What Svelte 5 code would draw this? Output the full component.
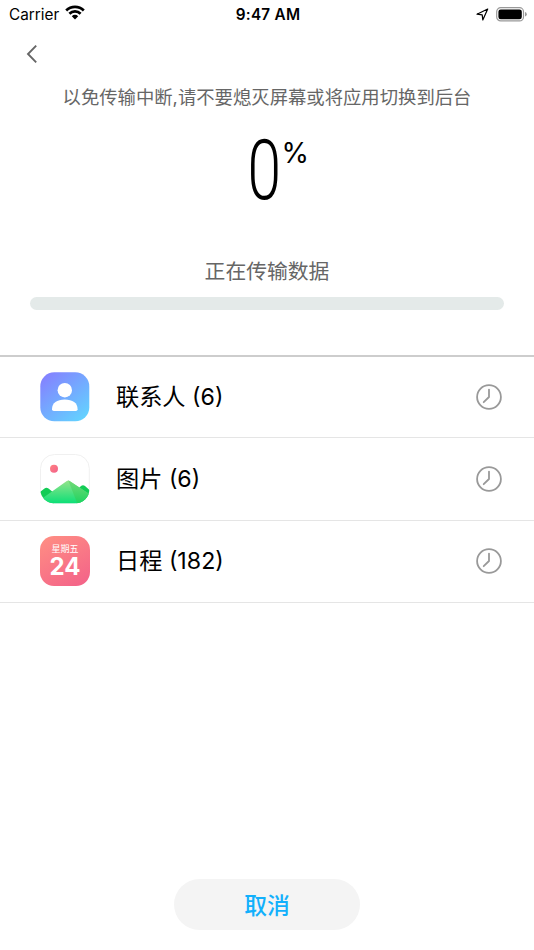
<script lang="ts">
	type Item = { icon: 'contacts' | 'photos' | 'calendar'; label: string; count: number };

	let progress = $state(0);

	const items: Item[] = [
		{ icon: 'contacts', label: '联系人', count: 6 },
		{ icon: 'photos', label: '图片', count: 6 },
		{ icon: 'calendar', label: '日程', count: 182 }
	];
</script>

<div class="screen">
	<div class="status-bar">
		<div class="carrier">
			<span>Carrier</span>
			<svg width="20" height="15" viewBox="0 0 20 15">
				<g fill="none" stroke="#000" stroke-width="2.7">
					<path d="M1.2 5.5 A12.4 12.4 0 0 1 18.8 5.5" />
					<path d="M4.4 8.8 A7.9 7.9 0 0 1 15.6 8.8" />
				</g>
				<path d="M10 14.4 L6.8 11.2 A4.5 4.5 0 0 1 13.2 11.2 Z" />
			</svg>
		</div>
		<span class="time">9:47 AM</span>
		<div class="indicators">
			<svg width="13" height="13" viewBox="0 0 13 13">
				<path
					d="M11.7 1 L1 6.2 L6.2 6.8 L6.8 11.9 Z"
					fill="none"
					stroke="#000"
					stroke-width="1.2"
					stroke-linejoin="round"
				/>
			</svg>
			<svg width="31" height="15" viewBox="0 0 31 15">
				<rect x="0.7" y="0.7" width="26.8" height="13.2" rx="4" fill="none" stroke="#999" stroke-width="1.2" />
				<rect x="2.4" y="2.4" width="23.4" height="9.8" rx="2.3" />
				<path d="M29 5 Q30.8 5.6 30.8 7.3 T29 9.6 Z" fill="#999" />
			</svg>
		</div>
	</div>

	<nav class="nav">
		<button class="back" aria-label="返回">
			<svg width="12" height="20" viewBox="0 0 12 20">
				<path d="M10.2 1.6 L2 10 L10.2 18.4" fill="none" stroke="#666" stroke-width="1.9" />
			</svg>
		</button>
	</nav>

	<p class="tip">以免传输中断,请不要熄灭屏幕或将应用切换到后台</p>

	<div class="percent">
		<span class="number">{progress}</span>
		<span class="unit">%</span>
	</div>

	<p class="state">正在传输数据</p>
	<div class="track">
		<div class="fill" style="width: {progress}%"></div>
	</div>

	<ul class="list">
		{#each items as item}
			<li class="row">
				{#if item.icon === 'contacts'}
					<svg class="icon" viewBox="0 0 50 50">
						<defs>
							<linearGradient id="contacts-bg" x1="0.1" y1="0" x2="0.9" y2="1">
								<stop offset="0" stop-color="#857fff" />
								<stop offset="1" stop-color="#62d5ff" />
							</linearGradient>
						</defs>
						<rect x="0.3" y="0.3" width="49" height="49" rx="14" fill="url(#contacts-bg)" />
						<circle cx="24.8" cy="18.2" r="7.2" fill="#fff" />
						<path
							d="M12 37.2 C12 31 17 27.6 24.8 27.6 S37.6 31 37.6 37.2 Q37.6 39 35.8 39 H13.8 Q12 39 12 37.2 Z"
							fill="#fff"
						/>
					</svg>
				{:else if item.icon === 'photos'}
					<svg class="icon" viewBox="0 0 50 50">
						<defs>
							<clipPath id="photos-clip">
								<rect x="0.3" y="0.3" width="49" height="49" rx="14" />
							</clipPath>
							<linearGradient id="hill-front" x1="0" y1="0" x2="0" y2="1">
								<stop offset="0" stop-color="#95e38b" />
								<stop offset="1" stop-color="#08df76" />
							</linearGradient>
							<linearGradient id="hill-side" x1="0" y1="0" x2="0" y2="1">
								<stop offset="0" stop-color="#75d978" />
								<stop offset="1" stop-color="#1bd45f" />
							</linearGradient>
							<linearGradient id="photos-sun" x1="0" y1="0" x2="1" y2="1">
								<stop offset="0" stop-color="#ff8280" />
								<stop offset="1" stop-color="#f2608b" />
							</linearGradient>
						</defs>
						<rect x="0.5" y="0.5" width="48.8" height="48.8" rx="14" fill="#fff" stroke="#f0f0f0" />
						<circle cx="14" cy="14.8" r="4" fill="url(#photos-sun)" />
						<g clip-path="url(#photos-clip)">
							<path d="M0 38 L4.5 34.4 Q6.5 33 8.5 34.6 L14 39 V50 H0 Z" fill="#12cc55" />
							<path d="M36 37 L41 32 Q43 30.3 45 32 L50 36.5 V50 H36 Z" fill="#12cc55" />
							<path d="M0 46 L26.8 27 Q28.2 26 29.6 27 L50 40.5 V50 H0 Z" fill="url(#hill-front)" />
							<path d="M28.2 26.3 L29.6 27 L50 40.5 V50 H37.5 Z" fill="url(#hill-side)" />
						</g>
					</svg>
				{:else}
					<div class="icon calendar">
						<span class="weekday">星期五</span>
						<span class="day">24</span>
					</div>
				{/if}

				<span class="label">{item.label} <span class="count">({item.count})</span></span>

				<svg class="pending" viewBox="0 0 26 26">
					<g fill="none" stroke="#999" stroke-width="1.8">
						<circle cx="13" cy="13" r="11.9" />
						<path d="M13 5.6 V13 L7.7 18.2" stroke-linecap="round" stroke-linejoin="round" />
					</g>
				</svg>
			</li>
		{/each}
	</ul>

	<div class="footer">
		<button class="cancel">取消</button>
	</div>
</div>

<style>
	:global(body) {
		margin: 0;
		background: #fff;
	}

	.screen {
		display: flex;
		flex-direction: column;
		height: 950px;
		overflow: hidden;
		font-family: Inter, 'Noto Sans CJK SC', sans-serif;
		color: #000;
	}

	p,
	ul {
		margin: 0;
		padding: 0;
	}

	button {
		border: 0;
		padding: 0;
		font-family: inherit;
	}

	.status-bar {
		display: grid;
		grid-template-columns: 1fr auto 1fr;
		align-items: center;
		height: 28px;
		padding: 0 7px 0 9px;
		font-size: 15.3px;
	}

	.carrier {
		display: flex;
		align-items: center;
		gap: 6px;
	}

	.carrier svg {
		margin-top: -3px;
	}

	.time {
		font-weight: 600;
		letter-spacing: 0.25px;
	}

	.indicators {
		display: flex;
		justify-content: flex-end;
		align-items: center;
		gap: 7px;
	}

	.nav {
		display: flex;
		align-items: center;
		height: 52px;
		padding-left: 26px;
	}

	.back {
		display: flex;
		background: none;
	}

	.tip {
		height: 34px;
		line-height: 34px;
		font-size: 18.35px;
		text-align: center;
		color: #666;
	}

	.percent {
		display: flex;
		justify-content: center;
		align-items: flex-start;
		height: 144px;
		padding-left: 26px;
	}

	.number {
		margin: 15px -6px 0 -10px;
		font-family: Roboto, sans-serif;
		font-weight: 300;
		font-size: 84px;
		line-height: 84px;
		transform: scaleX(0.72);
	}

	.unit {
		margin-top: 22px;
		font-size: 28px;
		line-height: 34px;
	}

	.state {
		height: 28px;
		line-height: 28px;
		font-size: 20.8px;
		text-align: center;
		color: #666;
	}

	.track {
		height: 13px;
		margin: 11px 30px 0;
		border-radius: 7px;
		background: #e4eae9;
		overflow: hidden;
	}

	.fill {
		height: 100%;
		background: #0eaefb;
	}

	.list {
		margin-top: 45px;
		border-top: 2px solid #cdcdcd;
		list-style: none;
	}

	.row {
		display: flex;
		align-items: center;
		box-sizing: border-box;
		height: 82.5px;
		padding: 0 32px 0 40px;
		border-bottom: 1.5px solid #e5e5e5;
	}

	.row:first-child {
		height: 81px;
	}

	.icon {
		width: 50px;
		height: 50px;
	}

	.calendar {
		display: flex;
		flex-direction: column;
		align-items: center;
		border-radius: 14px;
		background: linear-gradient(150deg, #ff8f83, #f36189);
		color: #fff;
	}

	.weekday {
		margin-top: 6px;
		font-size: 9px;
		line-height: 13px;
	}

	.day {
		font-size: 24px;
		font-weight: 700;
		line-height: 24px;
	}

	.label {
		flex: 1;
		margin-left: 26px;
		font-size: 23.2px;
		line-height: 34px;
	}

	.pending {
		width: 26px;
		height: 26px;
	}

	.footer {
		display: flex;
		justify-content: center;
		margin-top: auto;
		padding-bottom: 20px;
	}

	.cancel {
		width: 186px;
		height: 51px;
		border-radius: 26px;
		background: #f4f4f4;
		color: #12b0fc;
		font-size: 22.8px;
		font-weight: 500;
	}
</style>
